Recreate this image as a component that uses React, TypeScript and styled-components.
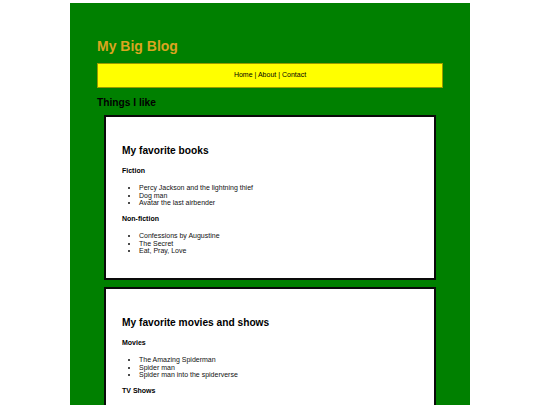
import React from "react";
import styled, { createGlobalStyle } from "styled-components";

const GlobalStyle = createGlobalStyle`
  html, body { background: #ffffff; }
  body {
    margin: 3px;
    font-family: "Liberation Sans", Arial, sans-serif;
    color: #000;
  }
`;

const Page = styled.div`
  box-sizing: border-box;
  width: 400px;
  margin: 0 auto;
  background: #008000;
  padding: 26px 27px 24px;
  display: flow-root;
`;

const SiteTitle = styled.h1`
  font-size: 14px;
  line-height: 16px;
  font-weight: bold;
  color: goldenrod;
  margin: 8.5px 0 9px;
`;

const Nav = styled.nav`
  background: #ffff00;
  border: 1px solid #9a9a00;
  padding: 7.5px 7px;
  text-align: center;
  font-size: 7px;
  line-height: 8px;
  color: #000;
`;

const NavLink = styled.span`
  color: #000;
`;

const SectionTitle = styled.h2`
  font-size: 10.2px;
  line-height: 11.6px;
  font-weight: bold;
  margin: 9px 0 7px;
  color: #000;
`;

const Cards = styled.div`
  display: flex;
  flex-direction: column;
  gap: 7.5px;
  padding: 0 7px;
`;

const Card = styled.section`
  background: #ffffff;
  border: 2px solid #0a0a0a;
  padding: 16px;
  display: flow-root;
`;

const CardTitle = styled.h2`
  font-size: 10.2px;
  line-height: 12px;
  font-weight: bold;
  margin: 12px 0 10px;
  color: #000;
`;

const Group = styled.h4`
  font-size: 7px;
  line-height: 8px;
  font-weight: bold;
  margin: 8.5px 0 9px;
  color: #000;
`;

const List = styled.ul`
  font-size: 7px;
  line-height: 7.5px;
  margin: 0 0 7px;
  padding-left: 17px;
  color: #111;
  list-style: disc;
`;

type Section = { title: string; groups: { name: string; items: string[] }[] };

const sections: Section[] = [
  {
    title: "My favorite books",
    groups: [
      {
        name: "Fiction",
        items: [
          "Percy Jackson and the lightning thief",
          "Dog man",
          "Avatar the last airbender",
        ],
      },
      {
        name: "Non-fiction",
        items: ["Confessions by Augustine", "The Secret", "Eat, Pray, Love"],
      },
    ],
  },
  {
    title: "My favorite movies and shows",
    groups: [
      {
        name: "Movies",
        items: [
          "The Amazing Spiderman",
          "Spider man",
          "Spider man into the spiderverse",
        ],
      },
      {
        name: "TV Shows",
        items: ["Invincible", "The Flash", "Stranger Things"],
      },
    ],
  },
];

export default function App() {
  return (
    <>
      <GlobalStyle />
      <Page>
        <SiteTitle>My Big Blog</SiteTitle>
        <Nav>
          <NavLink>Home</NavLink> | <NavLink>About</NavLink> |{" "}
          <NavLink>Contact</NavLink>
        </Nav>
        <SectionTitle>Things I like</SectionTitle>
        <Cards>
          {sections.map((s) => (
            <Card key={s.title}>
              <CardTitle>{s.title}</CardTitle>
              {s.groups.map((g) => (
                <React.Fragment key={g.name}>
                  <Group>{g.name}</Group>
                  <List>
                    {g.items.map((i) => (
                      <li key={i}>{i}</li>
                    ))}
                  </List>
                </React.Fragment>
              ))}
            </Card>
          ))}
        </Cards>
      </Page>
    </>
  );
}
